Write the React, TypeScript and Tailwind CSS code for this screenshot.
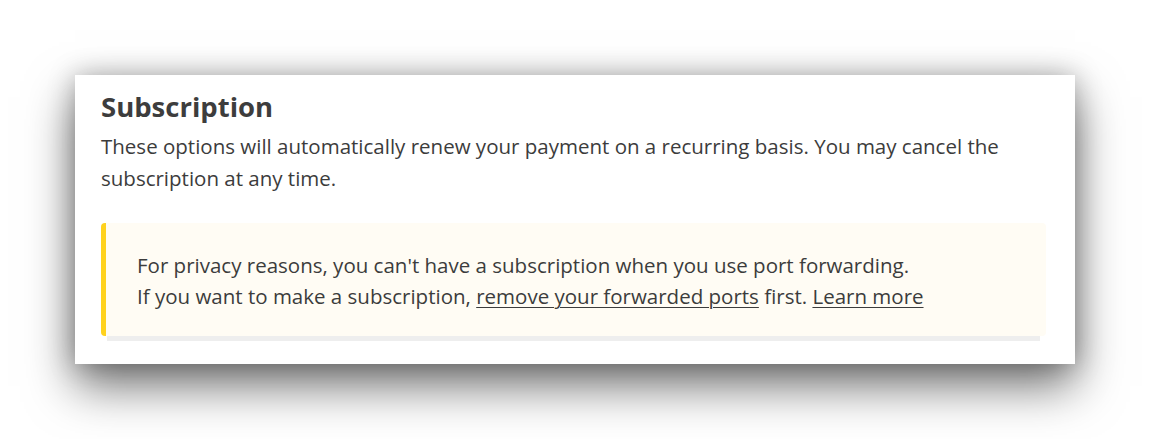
export default function App() {
  return (
    <div className="w-[1150px] h-[439px] bg-white pt-[75px] pl-[75px] font-['Open_Sans',sans-serif] text-[#3c3c3c]">
      <section className="w-[1000px] h-[289px] bg-white pl-[26px] pr-[29px] pt-[12px] shadow-[0_22px_45px_rgba(0,0,0,0.55),0_0_25px_rgba(0,0,0,0.25)]">
        <h2 className="text-[27.5px] font-bold leading-[40px] text-[#3d3d3d]">Subscription</h2>
        <p className="text-[20.5px] leading-[32px] mt-[3px]">
          These options will automatically renew your payment on a recurring basis. You may cancel the subscription at any time.
        </p>

        <div className="mt-[29px] h-[113px] bg-[#fffcf4] border-l-[5px] border-[#ffd21e] rounded-[4px] pl-[31px] pt-[27px] shadow-[0_11px_0_-6px_#eeeeee]">
          <p className="text-[20.5px] leading-[31px]">
            For privacy reasons, you can't have a subscription when you use port forwarding.
            <br />
            If you want to make a subscription,{" "}
            <a href="#" className="underline decoration-1 underline-offset-[3px]">remove your forwarded ports</a> first.{" "}
            <a href="#" className="underline decoration-1 underline-offset-[3px]">Learn more</a>
          </p>
        </div>
      </section>
    </div>
  );
}
